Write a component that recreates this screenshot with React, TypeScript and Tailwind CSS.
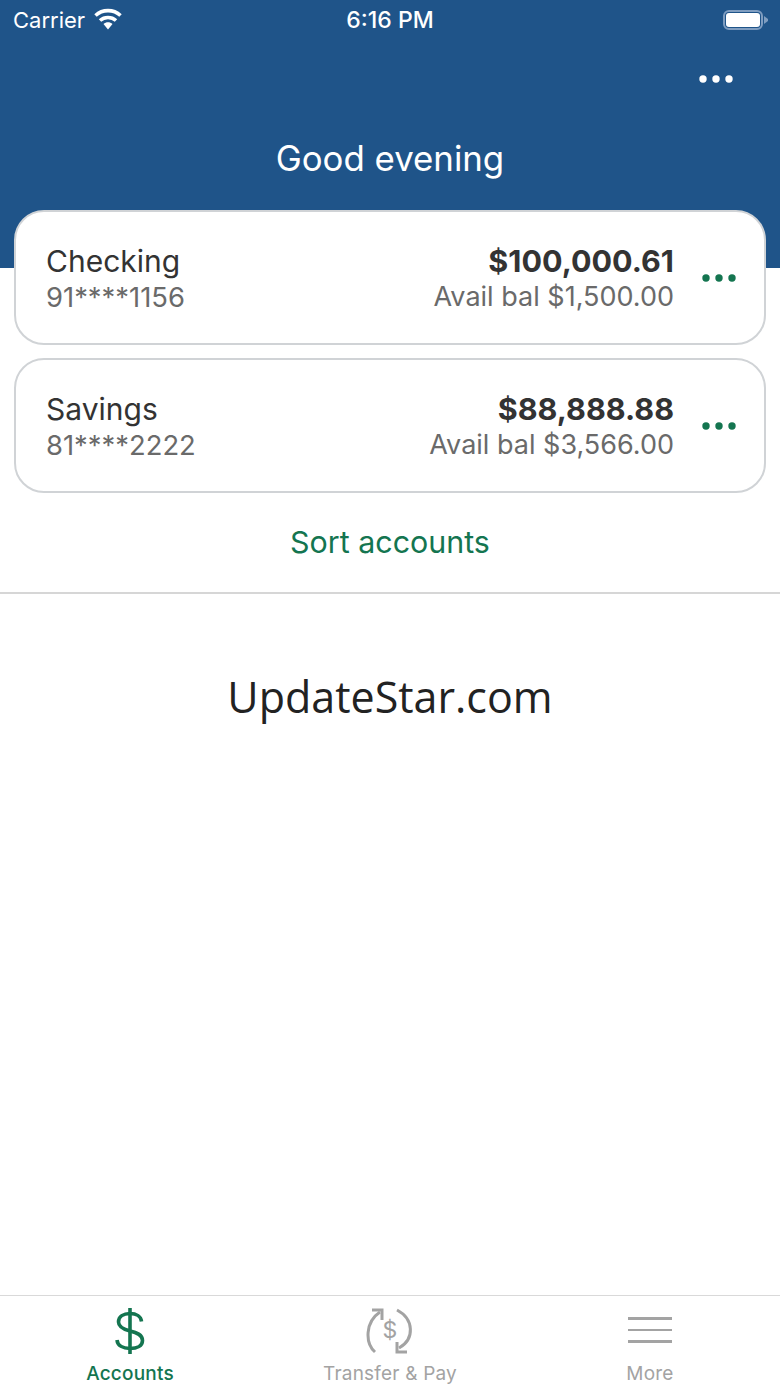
import React from "react";

const sans = "font-['Inter','Liberation_Sans',sans-serif]";

const accounts = [
  { name: "Checking", number: "91****1156", balance: "$100,000.61", avail: "Avail bal $1,500.00" },
  { name: "Savings", number: "81****2222", balance: "$88,888.88", avail: "Avail bal $3,566.00" },
];

const Dots = ({ color }: { color: string }) => (
  <svg width="36" height="10" viewBox="0 0 36 10" fill={color}>
    <circle cx="5" cy="5" r="3.7" />
    <circle cx="18" cy="5" r="3.7" />
    <circle cx="31" cy="5" r="3.7" />
  </svg>
);

const Wifi = () => (
  <svg width="28" height="22" viewBox="0 0 28 22" fill="none" stroke="#fff" strokeWidth="3.6" className="-mt-[2px]">
    <path d="M1.5 7.5C8.5 1 19.5 1 26.5 7.5" />
    <path d="M6 12.5C10.5 8.5 17.5 8.5 22 12.5" />
    <path d="M9.5 16C12 13.8 16 13.8 18.5 16L14 21.5Z" fill="#fff" stroke="none" />
  </svg>
);

const Battery = () => (
  <div className="flex items-center -mt-px">
    <div className="w-[40px] h-[20px] rounded-[6px] border-2 border-[#7f9dc0] p-px">
      <div className="w-full h-full rounded-[3px] bg-white" />
    </div>
    <svg width="4" height="8" viewBox="0 0 4 8" fill="#7f9dc0" className="ml-px">
      <path d="M0 0L4 3V5L0 8Z" />
    </svg>
  </div>
);

const DollarIcon = () => (
  <svg width="32" height="48" viewBox="0 0 32 48" fill="none" stroke="#147550" strokeWidth="3.6">
    <path d="M27.5 14.5C27 9.5 22.5 6.5 16 6.5C9.5 6.5 4.5 9.5 4.5 15C4.5 20.5 10 22.5 16 24C22.5 25.5 28.5 27.5 28.5 33.5C28.5 39 23 41.5 16 41.5C9 41.5 3.5 38.5 3 33" />
    <path d="M16 1V47" />
  </svg>
);

const TransferIcon = () => (
  <svg width="48" height="48" viewBox="0 0 48 48" fill="none" stroke="#a3a3a3" strokeWidth="3">
    <path d="M9 45C-1 36 -1 15 14 5" />
    <path d="M6 3H16V13" />
    <path d="M31 3C48 12 49 32 33 41" />
    <path d="M41 45H31V35" />
    <text x="24" y="31" textAnchor="middle" fontSize="23" fill="#a3a3a3" stroke="none" fontFamily="Inter, sans-serif">$</text>
  </svg>
);

const MenuIcon = () => (
  <div className="flex flex-col gap-[9px] w-[44px] -mt-[2px]">
    <div className="h-[2.5px] bg-[#a3a3a3]" />
    <div className="h-[2.5px] bg-[#a3a3a3]" />
    <div className="h-[2.5px] bg-[#a3a3a3]" />
  </div>
);

const AccountCard = ({ name, number, balance, avail }: (typeof accounts)[number]) => (
  <div className="h-[135px] rounded-[30px] border-2 border-[#d0d3d6] bg-white flex items-center pl-[30px] pr-[27px]">
    <div className="flex-1 pt-[2px]">
      <div className="text-[30px] leading-[36px] text-[#333]">{name}</div>
      <div className="text-[27.4px] leading-[36px] text-[#6a6a6a]">{number}</div>
    </div>
    <div className="text-right mr-[27px] pt-[2px]">
      <div className="text-[30.5px] leading-[36px] font-bold text-[#333]">{balance}</div>
      <div className="text-[27px] leading-[36px] text-[#6a6a6a]">{avail}</div>
    </div>
    <Dots color="#147550" />
  </div>
);

const Tab = ({ label, active, children }: { label: string; active?: boolean; children: React.ReactNode }) => (
  <div className="flex-1 flex flex-col items-center">
    <div className="h-[52px] flex items-center justify-center">{children}</div>
    <div className={`mt-[5px] text-[19px] leading-[24px] tracking-[0.2px] ${active ? "font-medium text-[#147550]" : "font-normal text-[#a3a3a3]"}`}>{label}</div>
  </div>
);

const App = () => {
  return (
    <div className={`w-[780px] h-[1387px] bg-white flex flex-col overflow-hidden ${sans}`}>
      <header className="h-[268px] shrink-0 bg-[#1f5489] text-white">
        <div className="h-[40px] pl-[13px] pr-[12px] flex items-center justify-between relative">
          <div className="flex items-center gap-[9px]">
            <span className="text-[22px] leading-[30px]">Carrier</span>
            <Wifi />
          </div>
          <span className="absolute left-0 right-0 text-center text-[23px] leading-[30px] font-medium">6:16 PM</span>
          <Battery />
        </div>
        <div className="flex justify-end pr-[46px] mt-[34px]">
          <Dots color="#fff" />
        </div>
        <h1 className="mt-[52px] text-center text-[34.8px] leading-[44px] font-normal">Good evening</h1>
      </header>
      <div className="-mt-[58px] px-[14px] flex flex-col gap-[13px]">
        {accounts.map((a) => (
          <AccountCard key={a.name} {...a} />
        ))}
      </div>
      <div className="h-[101px] shrink-0 border-b-2 border-[#d6d6d6] flex items-center justify-center text-[30.4px] text-[#147550]">
        Sort accounts
      </div>
      <div className="flex-1">
        <div className="mt-[73px] text-center text-[43px] leading-[60px] text-[#222] font-['Open_Sans',sans-serif]">UpdateStar.com</div>
      </div>
      <nav className="h-[92px] shrink-0 border-t border-[#d9d9d9] flex pt-[9px]">
        <Tab label="Accounts" active>
          <DollarIcon />
        </Tab>
        <Tab label="Transfer & Pay">
          <TransferIcon />
        </Tab>
        <Tab label="More">
          <MenuIcon />
        </Tab>
      </nav>
    </div>
  );
};

export default App;
